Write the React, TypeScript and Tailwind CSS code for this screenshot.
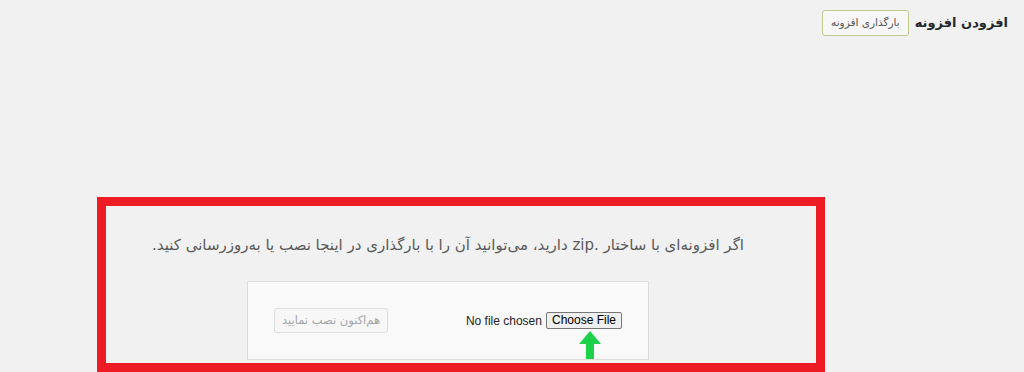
import React from 'react';

const fa = { fontFamily: '"DejaVu Sans", "Noto Sans", sans-serif' };
const en = { fontFamily: '"Liberation Sans", Arial, sans-serif' };

function UpArrow() {
  return (
    <svg width="22" height="28" viewBox="0 0 22 28" className="block">
      <polygon points="11,0 22,13 15,13 15,28 7,28 7,13 0,13" fill="#1fd14a" />
    </svg>
  );
}

export default function App() {
  return (
    <div dir="rtl" className="w-[1024px] h-[372px] overflow-hidden bg-[#f1f1f1]" style={fa}>
      <div className="flex items-center gap-[6px] pr-[16px] pt-[10px]">
        <h1 className="text-[13px] font-bold text-[#23282d] leading-[26px]">افزودن افزونه</h1>
        <button
          type="button"
          className="h-[26px] px-[8px] text-[10.5px] text-[#555] bg-[#f7f7f7] border border-[#c4c98c] rounded-[3px]"
        >
          بارگذاری افزونه
        </button>
      </div>

      <div className="mt-[161px] mr-[199px] w-[728px] h-[175px] border-[9px] border-[#ed1c24]">
        <div className="pl-0 pr-[26px] pt-[29px]">
          <p className="text-center text-[15px] leading-[20px] text-[#5a5a5a]">
            اگر افزونه‌ای با ساختار .zip دارید، می‌توانید آن را با بارگذاری در اینجا نصب یا به‌روزرسانی کنید.
          </p>
          <div className="mx-auto mt-[26px] w-[402px] h-[79px] bg-[#f9f9f9] border border-[#dcdcdc] flex items-center justify-between px-[26px]">
            <div className="relative flex items-center gap-[4px]" dir="rtl">
              <button
                type="button"
                className="h-[17px] px-[5px] text-[12px] leading-[15px] text-black bg-[#efefef] border border-[#767676] rounded-[2px]"
                style={en}
              >
                Choose File
              </button>
              <span className="text-[12px] text-[#222]" style={en}>
                No file chosen
              </span>
              <div className="absolute top-[19px] right-[21px]">
                <UpArrow />
              </div>
            </div>
            <button
              type="button"
              disabled
              className="h-[25px] w-[114px] text-[11.5px] text-[#a0a5aa] bg-[#f7f7f7] border border-[#ddd] rounded-[3px]"
            >
              هم‌اکنون نصب نمایید
            </button>
          </div>
        </div>
      </div>
    </div>
  );
}
